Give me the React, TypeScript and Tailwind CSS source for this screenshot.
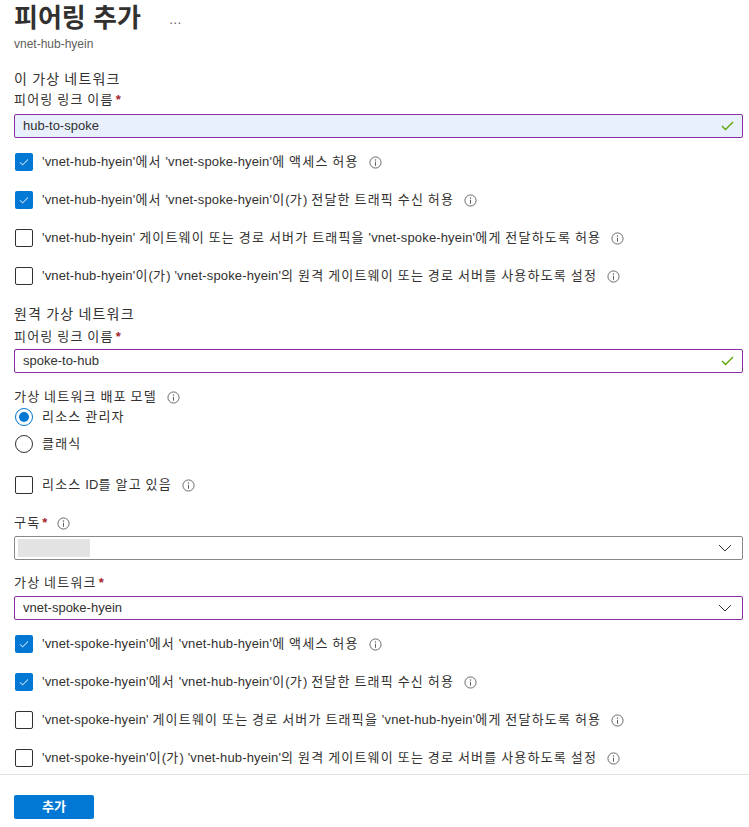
import React from 'react';

const font = "font-['Liberation_Sans','Noto_Sans_CJK_KR',sans-serif]";

// Korean runs get a little extra tracking so the line widths match the portal font
function T({ text }: { text: string }) {
  const parts = text.split(/([\uAC00-\uD7A3]+)/);
  return (
    <>
      {parts.map((p, i) =>
        /[\uAC00-\uD7A3]/.test(p) ? (
          <span key={i} className="tracking-[1.2px]">{p}</span>
        ) : (
          <span key={i} className="tracking-[0.15px]">{p}</span>
        )
      )}
    </>
  );
}

function InfoIcon() {
  return (
    <svg className="ml-[10px] w-[13px] h-[13px] shrink-0" viewBox="0 0 14 14" fill="none">
      <circle cx="7" cy="7" r="6" stroke="#605e5c" strokeWidth="1" />
      <circle cx="7" cy="4.3" r="0.8" fill="#605e5c" />
      <path d="M7 6.2v4.3" stroke="#605e5c" strokeWidth="1.1" />
    </svg>
  );
}

function Check({ label, checked, info = true }: { label: string; checked?: boolean; info?: boolean }) {
  return (
    <div className="flex items-center h-[20px]">
      {checked ? (
        <span className="w-[18px] h-[18px] ml-[1px] rounded-[2px] bg-[#0078d4] flex items-center justify-center shrink-0">
          <svg className="w-[12px] h-[12px]" viewBox="0 0 12 12" fill="none">
            <path d="M2 6.3l2.6 2.6L10 3.5" stroke="white" strokeWidth="1" />
          </svg>
        </span>
      ) : (
        <span className="w-[18px] h-[18px] ml-[1px] rounded-[2px] border border-[#323130] shrink-0" />
      )}
      <span className="ml-[9px] text-[13px] text-[#323130] whitespace-nowrap">
        <T text={label} />
      </span>
      {info && <InfoIcon />}
    </div>
  );
}

function Label({ text, required, info }: { text: string; required?: boolean; info?: boolean }) {
  return (
    <div className="flex items-center h-[20px] text-[13px] text-[#323130]">
      <span>
        <T text={text} />
      </span>
      {required && <span className="ml-[2px] font-bold text-[#a4262c]">*</span>}
      {info && <InfoIcon />}
    </div>
  );
}

function GreenCheck() {
  return (
    <svg className="w-[13px] h-[10px]" viewBox="0 0 13 10" fill="none">
      <path d="M1 5l3.5 3.5L12 1" stroke="#57a300" strokeWidth="1.3" />
    </svg>
  );
}

function Chevron() {
  return (
    <svg className="w-[14px] h-[8px]" viewBox="0 0 14 8" fill="none">
      <path d="M1 1l6 6 6-6" stroke="#323130" strokeWidth="1" />
    </svg>
  );
}

function Radio({ label, checked }: { label: string; checked?: boolean }) {
  return (
    <div className="flex items-center h-[20px]">
      <span
        className={
          checked
            ? 'w-[18px] h-[18px] ml-[1px] rounded-full border border-[#0078d4] flex items-center justify-center shrink-0'
            : 'w-[18px] h-[18px] ml-[1px] rounded-full border border-[#323130] shrink-0'
        }
      >
        {checked && <span className="w-[10px] h-[10px] rounded-full bg-[#0078d4]" />}
      </span>
      <span className="ml-[9px] text-[13px] text-[#323130]">
        <T text={label} />
      </span>
    </div>
  );
}

export default function App() {
  return (
    <div className={`w-[749px] min-h-[827px] bg-white ${font}`}>
      <div className="pl-[14px] pr-[6px]">
        <div className="flex items-center h-[36px]">
          <h1 className="text-[26px] font-bold text-[#323130] leading-[36px]">피어링 추가</h1>
          <span className="ml-[28px] mt-[2px] text-[13px] text-[#605e5c] leading-none">…</span>
        </div>
        <div className="text-[12px] leading-[16px] text-[#605e5c]">vnet-hub-hyein</div>

        <div className="mt-[17px] h-[20px] leading-[20px] text-[14px] text-[#323130]">
          <T text="이 가상 네트워크" />
        </div>
        <div className="mt-[1px]">
          <Label text="피어링 링크 이름" required />
        </div>
        <div className="mt-[4px] h-[24px] rounded-[2px] border border-[#8a2da5] bg-[#e8f0fe] flex items-center justify-between px-[8px]">
          <span className="text-[13px] text-[#323130]">hub-to-spoke</span>
          <GreenCheck />
        </div>

        <div className="mt-[14px] flex flex-col gap-[18px]">
          <Check checked label="'vnet-hub-hyein'에서 'vnet-spoke-hyein'에 액세스 허용" />
          <Check checked label="'vnet-hub-hyein'에서 'vnet-spoke-hyein'이(가) 전달한 트래픽 수신 허용" />
          <Check label="'vnet-hub-hyein' 게이트웨이 또는 경로 서버가 트래픽을 'vnet-spoke-hyein'에게 전달하도록 허용" />
          <Check label="'vnet-hub-hyein'이(가) 'vnet-spoke-hyein'의 원격 게이트웨이 또는 경로 서버를 사용하도록 설정" />
        </div>

        <div className="mt-[18px] h-[20px] leading-[20px] text-[14px] text-[#323130]">
          <T text="원격 가상 네트워크" />
        </div>
        <div className="mt-[3px]">
          <Label text="피어링 링크 이름" required />
        </div>
        <div className="mt-[2px] h-[24px] rounded-[2px] border border-[#8a2da5] bg-white flex items-center justify-between px-[8px]">
          <span className="text-[13px] text-[#323130]">spoke-to-hub</span>
          <GreenCheck />
        </div>

        <div className="mt-[14px]">
          <Label text="가상 네트워크 배포 모델" info />
        </div>
        <div className="flex flex-col gap-[7px]">
          <Radio checked label="리소스 관리자" />
          <Radio label="클래식" />
        </div>

        <div className="mt-[21px]">
          <Check label="리소스 ID를 알고 있음" />
        </div>

        <div className="mt-[18px]">
          <Label text="구독" required info />
        </div>
        <div className="mt-[3px] h-[24px] rounded-[2px] border border-[#8a8886] flex items-center justify-between pl-[3px] pr-[10px]">
          <span className="w-[72px] h-[18px] bg-[#e3e3e3]" />
          <Chevron />
        </div>

        <div className="mt-[13px]">
          <Label text="가상 네트워크" required />
        </div>
        <div className="mt-[3px] h-[24px] rounded-[2px] border border-[#8a2da5] flex items-center justify-between pl-[8px] pr-[10px]">
          <span className="text-[13px] text-[#323130]">vnet-spoke-hyein</span>
          <Chevron />
        </div>

        <div className="mt-[14px] flex flex-col gap-[18px]">
          <Check checked label="'vnet-spoke-hyein'에서 'vnet-hub-hyein'에 액세스 허용" />
          <Check checked label="'vnet-spoke-hyein'에서 'vnet-hub-hyein'이(가) 전달한 트래픽 수신 허용" />
          <Check label="'vnet-spoke-hyein' 게이트웨이 또는 경로 서버가 트래픽을 'vnet-hub-hyein'에게 전달하도록 허용" />
          <Check label="'vnet-spoke-hyein'이(가) 'vnet-hub-hyein'의 원격 게이트웨이 또는 경로 서버를 사용하도록 설정" />
        </div>
      </div>

      <div className="mt-[6px] border-t border-[#e1dfdd] pt-[19px] pl-[14px]">
        <button className="w-[80px] h-[24px] rounded-[2px] bg-[#0078d4] text-white text-[13px] font-bold">
          추가
        </button>
      </div>
    </div>
  );
}
